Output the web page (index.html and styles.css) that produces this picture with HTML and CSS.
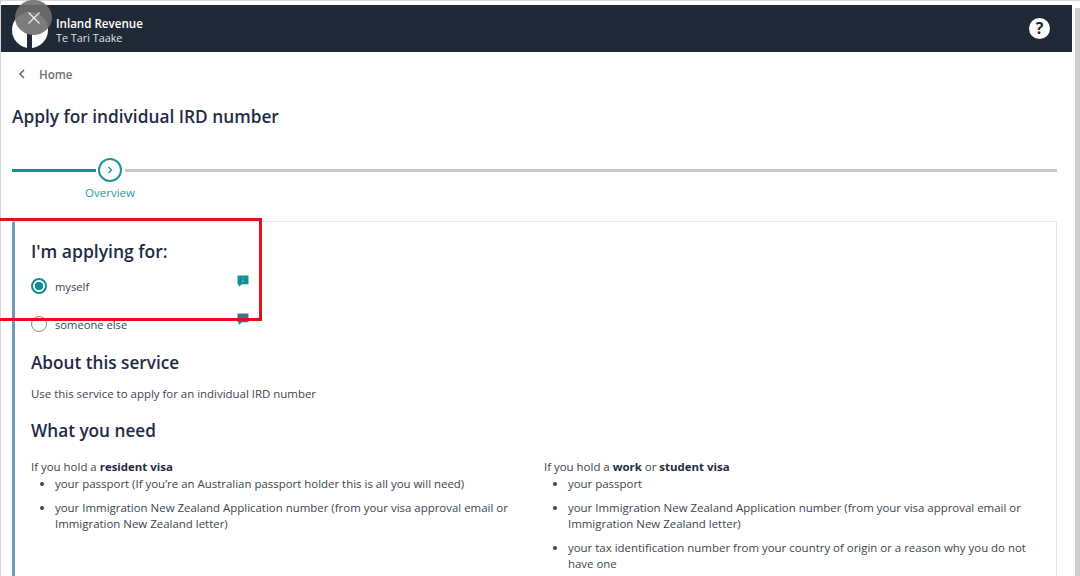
FILE: index.html
```html
<!DOCTYPE html>
<html>
<head>
  <meta charset="UTF-8">
  <title>Apply for individual IRD number</title>
  <link rel="stylesheet" href="styles.css">
</head>
<body>
  <div class="page">
    <div class="main">
      <header class="topbar">
        <div class="brand">
          <svg class="brand-logo" width="36" height="36" viewBox="0 0 36 36">
            <circle cx="18" cy="18" r="18" fill="#fff"/>
            <path d="M15 22h5v14h-5z" fill="#1f2a36"/>
          </svg>
          <div class="brand-text">
            <div class="brand-name">Inland Revenue</div>
            <div class="brand-sub">Te Tari Taake</div>
          </div>
        </div>
        <div class="help">?</div>
      </header>

      <nav class="crumb">
        <svg width="8" height="10" viewBox="0 0 8 10"><path d="M6 1L2 5l4 4" fill="none" stroke="#666" stroke-width="1.5"/></svg>
        <span>Home</span>
      </nav>

      <h1 class="title">Apply for individual IRD number</h1>

      <div class="stepper">
        <div class="step-row">
          <div class="line done"></div>
          <div class="step-circle">
            <svg width="6" height="8" viewBox="0 0 6 8"><path d="M1.500 1l3 3-3 3" fill="none" stroke="#0f8f96" stroke-width="1.200"/></svg>
          </div>
          <div class="line todo"></div>
        </div>
        <div class="step-label">Overview</div>
      </div>

      <section class="card">
        <h2 class="first">I'm applying for:</h2>
        <div class="option">
          <span class="radio checked"></span>
          <span>myself</span>
          <svg class="note" width="12" height="12" viewBox="0.5 0.5 11 11"><path d="M1 1h10v8H5l-3 2.500V9H1z" fill="#0f8f96"/><path d="M5.500 3h1v1h-1zM5.500 5h1v2h-1z" fill="#fff" opacity=".5"/></svg>
        </div>
        <div class="option second">
          <span class="radio"></span>
          <span>someone else</span>
          <svg class="note" width="12" height="12" viewBox="0.5 0.5 11 11"><path d="M1 1h10v8H5l-3 2.500V9H1z" fill="#2f7c86"/></svg>
        </div>

        <h2 class="about">About this service</h2>
        <p class="intro">Use this service to apply for an individual IRD number</p>

        <h2 class="need">What you need</h2>
        <div class="columns">
          <div>
            <p>If you hold a <b>resident visa</b></p>
            <ul>
              <li>your passport (If you’re an Australian passport holder this is all you will need)</li>
              <li>your Immigration New Zealand Application number (from your visa approval email or Immigration New Zealand letter)</li>
            </ul>
          </div>
          <div>
            <p>If you hold a <b>work</b> or <b>student visa</b></p>
            <ul>
              <li>your passport</li>
              <li>your Immigration New Zealand Application number (from your visa approval email or Immigration New Zealand letter)</li>
              <li>your tax identification number from your country of origin or a reason why you do not have one</li>
            </ul>
          </div>
        </div>
      </section>
    </div>
    <div class="scrollbar"></div>
  </div>

  <div class="close-btn">
    <svg width="14" height="14" viewBox="0 0 14 14"><path d="M1.500 1.500l11 11M12.500 1.500l-11 11" stroke="#eee" stroke-width="1.300"/></svg>
  </div>
  <div class="highlight"></div>
</body>
</html>
```

FILE: styles.css
```css
/* page frame */
html, body {
  margin: 0;
  height: 576px;
  overflow: hidden;
}

body {
  font-family: "Open Sans", "Noto Sans", sans-serif;
  font-size: 11.450px;
  color: #3c4450;
  background-color: #fff;
}

.page {
  display: flex;
  height: 576px;
  box-sizing: border-box;
  padding-top: 4px;
  border-top: 1px solid #d8d8d8;
  border-left: 1px solid #d4d4d4;
}

.main {
  flex: 1;
  min-width: 0;
}

.scrollbar {
  width: 5px;
  margin: 3px 0 0 3px;
  background-color: #cfcfcf;
}

/* header */
.topbar {
  display: flex;
  align-items: center;
  justify-content: space-between;
  height: 47px;
  padding: 0 22px 0 11px;
  background-color: #1f2a36;
  color: #fff;
}

.brand {
  display: flex;
  align-items: center;
  gap: 8px;
}

.brand-logo {
  margin-top: 3px;
}

.brand-text {
  margin-top: 4px;
}

.brand-name {
  font-size: 11.600px;
  font-weight: 600;
  line-height: 15px;
}

.brand-sub {
  font-size: 10.800px;
  line-height: 14px;
  color: #dfe3e6;
}

.help {
  width: 21px;
  height: 21px;
  border-radius: 50%;
  background-color: #fff;
  color: #1f2a36;
  font-size: 16px;
  font-weight: 700;
  line-height: 21px;
  text-align: center;
}

.crumb {
  display: flex;
  align-items: center;
  gap: 13px;
  padding: 14px 0 0 17px;
  height: 16px;
  font-size: 11.600px;
  font-weight: 600;
  color: #6b7076;
}

.title {
  margin: 22px 0 0 11px;
  font-size: 17.300px;
  font-weight: 600;
  line-height: 26px;
  color: #1f2b45;
}

/* stepper */
.stepper {
  margin: 28px 15px 0 11px;
}

.step-row {
  display: flex;
  align-items: center;
  height: 24px;
}

.line {
  height: 3px;
}

.line.done {
  width: 84px;
  background-color: #0f8f96;
}

.line.todo {
  flex: 1;
  margin-left: 3px;
  background-color: #c9c9c9;
}

.step-circle {
  display: flex;
  align-items: center;
  justify-content: center;
  box-sizing: border-box;
  width: 24px;
  height: 24px;
  margin-left: 2px;
  border: 2px solid #1d949b;
  border-radius: 50%;
}

.step-label {
  width: 100px;
  margin: 3px 0 0 48px;
  font-size: 11.500px;
  line-height: 16px;
  text-align: center;
  color: #2c9aa0;
}

/* card */
.card {
  box-sizing: border-box;
  height: 360px;
  margin: 20px 15px 0 11px;
  padding: 17px 0 0 16px;
  border: 1px solid #e6e6e6;
  border-left: 3px solid #6d9db3;
  border-radius: 2px;
}

h2 {
  margin: 0;
  font-size: 17.200px;
  font-weight: 600;
  line-height: 24px;
  color: #1f2b45;
}

h2.first {
  font-size: 17.500px;
}

.option {
  display: flex;
  align-items: center;
  gap: 8px;
  width: 218px;
  height: 18px;
  margin-top: 14px;
  font-size: 11.200px;
}

.option.second {
  margin-top: 20px;
}

.note {
  margin: -10px 0 0 auto;
}

.radio {
  box-sizing: border-box;
  width: 16px;
  height: 16px;
  border: 1.500px solid #8a8a8a;
  border-radius: 50%;
}

.radio.checked {
  border: 2px solid #0f8f96;
  background: radial-gradient(circle, #0f8f96 0 4px, #fff 4.500px);
}

.about {
  margin-top: 18px;
}

.intro {
  margin: 11px 0 0;
  line-height: 16px;
}

.need {
  margin-top: 17px;
}

.columns {
  display: grid;
  grid-template-columns: 513px 1fr;
  margin-top: 16px;
}

.columns p {
  margin: 0;
  line-height: 16px;
}

.columns > div + div {
  padding-right: 30px;
}

b {
  font-weight: 700;
  color: #1f2b45;
}

ul {
  margin: 1px 0 0;
  padding-left: 24px;
}

li {
  margin-bottom: 7px;
  line-height: 16.500px;
}

/* over the page */
.close-btn {
  position: absolute;
  left: 15px;
  top: 0;
  display: flex;
  align-items: center;
  justify-content: center;
  width: 37px;
  height: 35px;
  border-radius: 50%;
  background-color: rgba(110, 110, 110, 0.9);
}

.highlight {
  position: absolute;
  left: -4px;
  top: 218px;
  width: 260px;
  height: 97px;
  border: 3px solid #e3101c;
}
```
